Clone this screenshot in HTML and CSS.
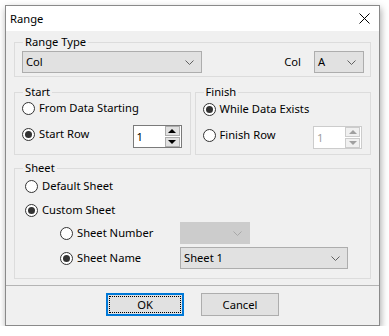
FILE: index.html
```html
<!DOCTYPE html>
<html>
<head>
<meta charset="utf-8">
<link rel="stylesheet" href="styles.css">
</head>
<body>
<div class="dialog">
  <div class="titlebar">
    <span class="title">Range</span>
    <svg class="close" width="11" height="11" viewBox="0 0 11 11"><path d="M0.5 0.5 L10.5 10.5 M10.5 0.5 L0.5 10.5" stroke="#000" stroke-width="1" fill="none"/></svg>
  </div>
  <div class="content">
    <fieldset class="group group-type">
      <legend>Range Type</legend>
      <div class="type-row">
        <div class="combo combo-type"><span class="combo-text">Col</span><svg class="chev" width="9" height="5" viewBox="0 0 9 5"><path d="M0.5 0.5 L4.5 4.5 L8.5 0.5" stroke="#606060" fill="none"/></svg></div>
        <span class="col-label">Col</span>
        <div class="combo combo-col"><span class="combo-text">A</span><svg class="chev" width="9" height="5" viewBox="0 0 9 5"><path d="M0.5 0.5 L4.5 4.5 L8.5 0.5" stroke="#606060" fill="none"/></svg></div>
      </div>
    </fieldset>

    <div class="pair">
      <fieldset class="group group-half">
        <legend>Start</legend>
        <div class="radio-row"><span class="radio"></span><span>From Data Starting</span></div>
        <div class="spin-row">
          <div class="radio-row"><span class="radio checked"></span><span>Start Row</span></div>
          <div class="spin">
            <span class="spin-val">1</span>
            <div class="spin-btns">
              <span class="spin-btn"><span class="tri-up"></span></span>
              <span class="spin-btn"><span class="tri-down"></span></span>
            </div>
          </div>
        </div>
      </fieldset>
      <fieldset class="group group-half">
        <legend>Finish</legend>
        <div class="radio-row first-finish"><span class="radio checked"></span><span>While Data Exists</span></div>
        <div class="spin-row">
          <div class="radio-row"><span class="radio"></span><span>Finish Row</span></div>
          <div class="spin disabled">
            <span class="spin-val">1</span>
            <div class="spin-btns">
              <span class="spin-btn"><span class="tri-up"></span></span>
              <span class="spin-btn"><span class="tri-down"></span></span>
            </div>
          </div>
        </div>
      </fieldset>
    </div>

    <fieldset class="group group-sheet">
      <legend>Sheet</legend>
      <div class="radio-row sheet-radio"><span class="radio"></span><span>Default Sheet</span></div>
      <div class="radio-row sheet-radio custom"><span class="radio checked"></span><span>Custom Sheet</span></div>
      <div class="sub-row first-sub">
        <div class="radio-row sub-label"><span class="radio"></span><span>Sheet Number</span></div>
        <div class="combo combo-num disabled"><span class="combo-text"></span><svg class="chev" width="9" height="5" viewBox="0 0 9 5"><path d="M0.5 0.5 L4.5 4.5 L8.5 0.5" stroke="#a8a8a8" fill="none"/></svg></div>
      </div>
      <div class="sub-row">
        <div class="radio-row sub-label"><span class="radio checked"></span><span>Sheet Name</span></div>
        <div class="combo combo-name"><span class="combo-text">Sheet 1</span><svg class="chev" width="9" height="5" viewBox="0 0 9 5"><path d="M0.5 0.5 L4.5 4.5 L8.5 0.5" stroke="#606060" fill="none"/></svg></div>
      </div>
    </fieldset>
  </div>
  <div class="footer">
    <button class="btn btn-ok"><span class="focus">OK</span></button>
    <button class="btn">Cancel</button>
  </div>
</div>
</body>
</html>
```

FILE: styles.css
```css
* { box-sizing: border-box; }
html, body { margin: 0; padding: 0; background: #ffffff; }
body {
  font-family: "Noto Sans", "Open Sans", sans-serif;
  font-size: 11.2px;
  line-height: 16px;
  color: #000;
  padding: 5px 0 0 5px;
}
.dialog {
  width: 375px;
  height: 321px;
  border: 1px solid #8a8a8a;
  background: #f0f0f0;
  box-shadow: 1px 3px 7px rgba(0,0,0,0.35);
  display: flex;
  flex-direction: column;
}
.titlebar {
  height: 25px;
  background: #ffffff;
  display: flex;
  align-items: center;
  justify-content: space-between;
  padding: 0 9px 0 4px;
}
.title { font-size: 11.2px; }
.close { display: block; }
.content {
  padding: 3px 8px 6px 8px;
  display: flex;
  flex-direction: column;
}
.group {
  margin: 0;
  min-width: 0;
  border: 1px solid #dcdcdc;
  padding: 1px 6px 3px 7px;
}
.group legend {
  padding: 0 2px;
  margin-left: 1px;
  line-height: 16px;
  height: 16px;
}
.type-row {
  display: flex;
  align-items: center;
}
.combo {
  height: 22px;
  background: #e1e1e1;
  border: 1px solid #adadad;
  display: flex;
  align-items: center;
  justify-content: space-between;
  padding: 0 7px 0 3px;
}
.combo .chev { display: block; }
.combo-type { width: 180px; }
.col-label { margin-left: auto; margin-right: 13px; }
.combo-col { width: 50px; }
.combo.disabled { background: #cccccc; border-color: #cccccc; }
.combo-num { width: 70px; }
.combo-name { width: 168px; }

.pair {
  display: flex;
  gap: 4px;
  margin-top: 7px;
}
.group-half {
  flex: 1 1 0;
  padding: 0 8px 5px 7px;
}
.radio-row {
  display: flex;
  align-items: center;
  gap: 4px;
  height: 16px;
  white-space: nowrap;
}
.radio {
  width: 13px;
  height: 13px;
  border: 1px solid #333;
  border-radius: 50%;
  background: #fff;
  flex: 0 0 auto;
  display: flex;
  align-items: center;
  justify-content: center;
}
.radio.checked::after {
  content: "";
  width: 7px;
  height: 7px;
  border-radius: 50%;
  background: #333;
}
.first-finish { margin-top: 1px; }
.spin-row {
  display: flex;
  align-items: flex-start;
  margin-top: 9px;
}
.spin-row .radio-row { margin-top: 1px; }
.spin {
  margin-left: auto;
  width: 49px;
  height: 23px;
  background: #fff;
  border: 1px solid #7a7a7a;
  display: flex;
  justify-content: space-between;
  padding: 0 1px 0 3px;
}
.spin-val { line-height: 21px; }
.spin-btns {
  display: flex;
  flex-direction: column;
  gap: 1px;
  padding-top: 0;
}
.spin-btn {
  width: 15px;
  height: 10px;
  background: #e1e1e1;
  border: 1px solid #adadad;
  display: flex;
  align-items: center;
  justify-content: center;
}
.tri-up {
  width: 0; height: 0;
  border-left: 4px solid transparent;
  border-right: 4px solid transparent;
  border-bottom: 4px solid #000;
}
.tri-down {
  width: 0; height: 0;
  border-left: 4px solid transparent;
  border-right: 4px solid transparent;
  border-top: 4px solid #000;
}
.spin.disabled { border-color: #cccccc; }
.spin.disabled .spin-val { color: #a0a0a0; }
.spin.disabled .spin-btn { background: #f0f0f0; border-color: #cccccc; }
.spin.disabled .tri-up { border-bottom-color: #a0a0a0; }
.spin.disabled .tri-down { border-top-color: #a0a0a0; }

.group-sheet {
  margin-top: 5px;
  padding: 2px 7px 9px 7px;
}
.sheet-radio { margin-left: 3px; }
.sheet-radio.custom { margin-top: 8px; }
.sub-row {
  display: flex;
  align-items: center;
  margin-top: 3px;
}
.sub-row.first-sub { margin-top: 4px; }
.sub-label { width: 120px; margin-left: 38px; }

.footer {
  border-top: 1px solid #b4b4b4;
  flex: 1;
  display: flex;
  justify-content: center;
  align-items: flex-start;
  gap: 17px;
  padding-top: 7px;
}
.btn {
  width: 78px;
  height: 23px;
  background: #e1e1e1;
  border: 1px solid #adadad;
  font-family: inherit;
  font-size: 11.2px;
  color: #000;
  padding: 0;
  display: flex;
  align-items: center;
  justify-content: center;
}
.btn-ok {
  border: 2px solid #0078d7;
  padding: 1px;
}
.focus {
  width: 100%;
  height: 100%;
  border: 1px dotted #000;
  display: flex;
  align-items: center;
  justify-content: center;
}
```
